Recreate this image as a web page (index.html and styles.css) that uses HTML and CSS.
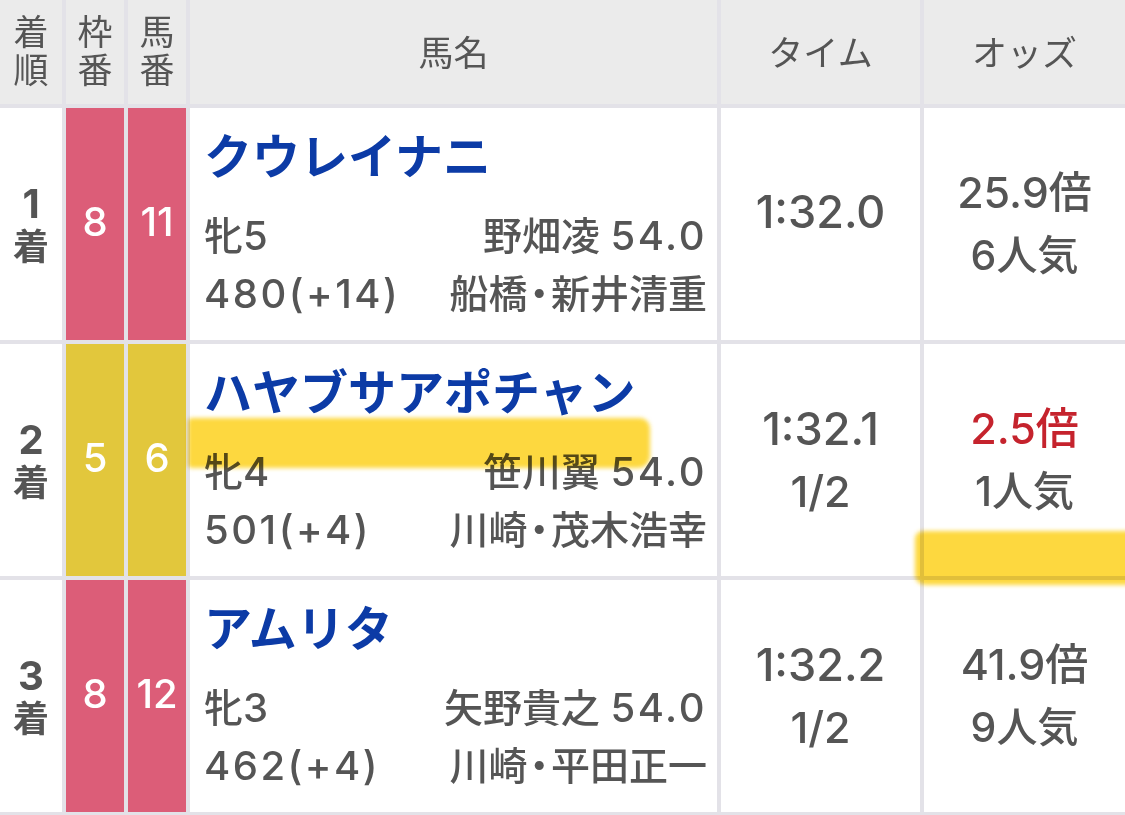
FILE: index.html
```html
<!DOCTYPE html>
<html lang="ja">
<head>
<meta charset="utf-8">
<title>レース結果</title>
<link rel="stylesheet" href="styles.css">
</head>
<body>
<div class="result">
  <div class="grid">
    <div class="hd hd-stack"><span>着</span><span>順</span></div>
    <div class="hd hd-stack"><span>枠</span><span>番</span></div>
    <div class="hd hd-stack"><span>馬</span><span>番</span></div>
    <div class="hd">馬名</div>
    <div class="hd">タイム</div>
    <div class="hd">オッズ</div>

    <div class="cell rank"><span class="rk-num">1</span><span class="rk-unit">着</span></div>
    <div class="cell waku waku8">8</div>
    <div class="cell waku waku8 uma">11</div>
    <div class="cell horse">
      <div class="name">クウレイナニ</div>
      <div class="sub"><span>牝<span class="num">5</span></span><span>野畑凌 <span class="num">54.0</span></span></div>
      <div class="sub"><span class="num">480(+14)</span><span>船橋<span class="dot">・</span>新井清重</span></div>
    </div>
    <div class="cell time single"><span>1:32.0</span></div>
    <div class="cell odds"><span class="od">25.9倍</span><span class="pop">6人気</span></div>

    <div class="cell rank"><span class="rk-num">2</span><span class="rk-unit">着</span></div>
    <div class="cell waku waku5">5</div>
    <div class="cell waku waku5 uma">6</div>
    <div class="cell horse">
      <div class="name">ハヤブサアポチャン</div>
      <div class="sub"><span>牝<span class="num">4</span></span><span>笹川翼 <span class="num">54.0</span></span></div>
      <div class="sub"><span class="num">501(+4)</span><span>川崎<span class="dot">・</span>茂木浩幸</span></div>
    </div>
    <div class="cell time"><span>1:32.1</span><span class="diff">1/2</span></div>
    <div class="cell odds"><span class="od fav">2.5倍</span><span class="pop">1人気</span></div>

    <div class="cell rank"><span class="rk-num">3</span><span class="rk-unit">着</span></div>
    <div class="cell waku waku8">8</div>
    <div class="cell waku waku8 uma">12</div>
    <div class="cell horse">
      <div class="name">アムリタ</div>
      <div class="sub"><span>牝<span class="num">3</span></span><span>矢野貴之 <span class="num">54.0</span></span></div>
      <div class="sub"><span class="num">462(+4)</span><span>川崎<span class="dot">・</span>平田正一</span></div>
    </div>
    <div class="cell time"><span>1:32.2</span><span class="diff">1/2</span></div>
    <div class="cell odds"><span class="od">41.9倍</span><span class="pop">9人気</span></div>
  </div>
  <div class="marker marker-name"></div>
  <div class="marker marker-odds"></div>
</div>
</body>
</html>
```

FILE: styles.css
```css
html, body {
  margin: 0;
  padding: 0;
  background: #ffffff;
}

body {
  font-family: Inter, "Noto Sans CJK JP", sans-serif;
  color: #555555;
}

.result {
  position: relative;
  width: 1125px;
  height: 815px;
  overflow: hidden;
}

.grid {
  display: grid;
  grid-template-columns: 62px 58px 58px 527px 199px 1fr;
  grid-template-rows: 104px 232px 232px 232px;
  column-gap: 4px;
  row-gap: 4px;
  padding-bottom: 3px;
  background: #e3e2e8;
}

.hd {
  background: #ebebeb;
  display: flex;
  align-items: center;
  justify-content: center;
  font-family: "Noto Sans CJK JP", sans-serif;
  font-size: 35px;
  font-weight: 400;
  color: #555555;
  padding-bottom: 4px;
}

.hd-stack {
  flex-direction: column;
  line-height: 38px;
  padding-bottom: 6px;
}

.cell {
  background: #ffffff;
}

.rank {
  display: flex;
  flex-direction: column;
  align-items: center;
  justify-content: center;
  color: #555555;
  line-height: 40px;
}

.rk-num {
  font-size: 40px;
  font-weight: 700;
}

.rk-unit {
  font-family: "Noto Sans CJK JP", sans-serif;
  font-size: 36px;
  font-weight: 700;
}

.waku {
  display: flex;
  align-items: center;
  justify-content: center;
  color: #ffffff;
  font-size: 40px;
  font-weight: 500;
  padding-bottom: 6px;
}

.waku8 {
  background: #dc5d78;
}

.waku5 {
  background: #e2c73c;
}

.horse {
  display: flex;
  flex-direction: column;
  padding: 13px 10px 0 14px;
}

.name {
  font-family: "Noto Sans CJK JP", sans-serif;
  font-size: 48px;
  font-weight: 700;
  color: #0c3ba6;
  line-height: 64px;
  margin-bottom: 22px;
  white-space: nowrap;
}

.sub {
  display: flex;
  justify-content: space-between;
  white-space: nowrap;
  font-size: 39px;
  font-weight: 500;
  line-height: 58px;
  color: #555555;
}

.sub > span {
  flex: none;
}

.num {
  font-size: 40px;
  letter-spacing: 2.5px;
}

.dot {
  font-feature-settings: "halt";
  padding: 0 2px;
}

.time,
.odds {
  display: flex;
  flex-direction: column;
  align-items: center;
  justify-content: center;
  color: #555555;
  font-weight: 500;
}

.time {
  font-size: 45px;
  line-height: 62px;
}

.time.single {
  padding-bottom: 24px;
}

.diff {
  font-size: 43px;
}

.odds {
  font-size: 41px;
  line-height: 63px;
}

.od {
  font-size: 43px;
}

.od.fav {
  color: #c5232d;
}

.marker {
  position: absolute;
  background: #fdd52e;
  mix-blend-mode: multiply;
  filter: blur(2px);
  opacity: 0.92;
}

.marker-name {
  left: 188px;
  top: 418px;
  width: 462px;
  height: 50px;
  border-radius: 4px 10px 12px 4px;
}

.marker-odds {
  left: 915px;
  top: 531px;
  width: 215px;
  height: 54px;
  border-radius: 8px 0 0 10px;
}
```
